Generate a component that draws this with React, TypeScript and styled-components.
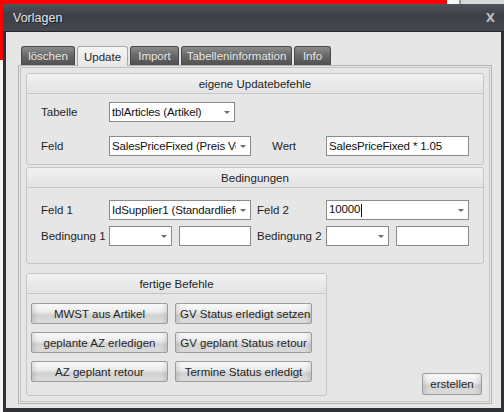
import React from "react";
import styled, { createGlobalStyle } from "styled-components";

const GlobalStyle = createGlobalStyle`
    html, body {
        margin: 0;
        padding: 0;
        width: 504px;
        height: 412px;
        overflow: hidden;
        font-family: "Liberation Sans", Arial, sans-serif;
        font-size: 11px;
        color: #1f1f1f;
    }
    body {
        background:
            linear-gradient(#ff0000, #ff0000) 0 0 / 447px 4px no-repeat,
            linear-gradient(#ff0000, #ff0000) 0 0 / 3px 60px no-repeat,
            linear-gradient(#9a9a9a, #9a9a9a) 459px 0 / 2px 4px no-repeat,
            linear-gradient(#d8d8d8, #d8d8d8) 461px 0 / 43px 4px no-repeat,
            #f6f6f6;
    }
`;

const Dialog = styled.div`
    margin: 4px 0 0 3px;
    width: 501px;
    height: 408px;
    display: flex;
    flex-direction: column;
    background: #2f3137;
`;

const TitleBar = styled.div`
    height: 28px;
    flex: none;
    display: flex;
    align-items: center;
    justify-content: space-between;
    padding: 0 9px 0 10px;
    background: linear-gradient(#50535b, #3d4047 40%, #45484f);
    border-bottom: 1px solid #26272b;
    box-sizing: border-box;
`;

const Title = styled.span`
    color: #e4e4e4;
    font-size: 12.5px;
    text-shadow: 1px 1px 0 #1c1c1c;
`;

const CloseX = styled.span`
    color: #b8bcc4;
    font-size: 12px;
    font-weight: bold;
    font-family: "DejaVu Sans", sans-serif;
`;

const Body = styled.div`
    flex: 1;
    margin: 0 3px 4px 3px;
    background: #e6e6e6;
    padding: 13px 9px 0 12px;
    display: flex;
    flex-direction: column;
`;

const TabBar = styled.div`
    display: flex;
    align-items: flex-end;
    gap: 2px;
    padding-left: 3px;
    height: 20px;
`;

const Tab = styled.div<{ $active?: boolean; $w: number }>`
    width: ${(p) => p.$w}px;
    height: ${(p) => (p.$active ? "20px" : "19px")};
    box-sizing: border-box;
    display: flex;
    align-items: center;
    justify-content: center;
    border-radius: 3px 3px 0 0;
    font-size: 11.5px;
    white-space: nowrap;
    border: 1px solid ${(p) => (p.$active ? "#a8a8a8" : "#4a4a4a")};
    border-bottom: none;
    color: ${(p) => (p.$active ? "#1f1f1f" : "#e6e6e6")};
    background: ${(p) =>
        p.$active
            ? "linear-gradient(#f4f4f4, #e8e8e8)"
            : "linear-gradient(#8c8c8c, #6a6a6a 45%, #505050)"};
    margin-bottom: ${(p) => (p.$active ? "-1px" : "0")};
    position: relative;
    z-index: ${(p) => (p.$active ? 1 : 0)};
`;

const TabPane = styled.div`
    height: 339px;
    box-sizing: border-box;
    border: 1px solid #b4b4b4;
    box-shadow: inset 0 0 0 1px #e6e6e6, inset 0 0 0 2px #c4c4c4;
    padding: 7px 7px 8px 7px;
    display: flex;
    flex-direction: column;
    gap: 2px;
`;

const Group = styled.div<{ $width?: number }>`
    width: ${(p) => (p.$width ? `${p.$width}px` : "auto")};
    border: 1px solid #c6c6c6;
    border-radius: 3px;
    background: #e6e6e6;
    box-sizing: border-box;
`;

const GroupHeader = styled.div`
    height: 20px;
    display: flex;
    align-items: center;
    justify-content: center;
    font-size: 11.5px;
    background: linear-gradient(#f2f2f2, #e2e2e2);
    border-bottom: 1px solid #c6c6c6;
    border-radius: 3px 3px 0 0;
    box-sizing: border-box;
`;

const GroupContent = styled.div<{ $pad: string; $gap: number }>`
    padding: ${(p) => p.$pad};
    display: flex;
    flex-direction: column;
    gap: ${(p) => p.$gap}px;
`;

const Row = styled.div`
    display: flex;
    align-items: center;
    height: 20px;
`;

const Label = styled.span<{ $w: number; $ml?: number }>`
    width: ${(p) => p.$w}px;
    margin-left: ${(p) => p.$ml ?? 0}px;
    flex: none;
    font-size: 11.5px;
`;

const FieldBox = styled.div<{ $w: number; $ml?: number }>`
    width: ${(p) => p.$w}px;
    margin-left: ${(p) => p.$ml ?? 0}px;
    height: 20px;
    flex: none;
    box-sizing: border-box;
    border: 1px solid #8c8c8c;
    background: #ffffff;
    display: flex;
    align-items: center;
    padding: 0 0 0 2px;
    font-size: 11.5px;
    letter-spacing: -0.15px;
    color: #111;
    white-space: nowrap;
    overflow: hidden;
`;

const FieldText = styled.span`
    flex: 1;
    overflow: hidden;
`;

const Arrow = styled.span`
    width: 14px;
    flex: none;
    display: flex;
    justify-content: center;
    &::after {
        content: "";
        border-left: 3px solid transparent;
        border-right: 3px solid transparent;
        border-top: 3px solid #6a6a6a;
    }
`;

const Caret = styled.span`
    display: inline-block;
    width: 1px;
    height: 13px;
    background: #111;
    vertical-align: middle;
    margin-left: 1px;
`;

const Bottom = styled.div`
    flex: 1;
    display: flex;
    align-items: flex-end;
    justify-content: space-between;
    padding-top: 7px;
`;

const ButtonGrid = styled.div`
    display: grid;
    grid-template-columns: 137px 137px;
    column-gap: 7px;
    row-gap: 8px;
    padding: 9px 13px 13px 4px;
`;

const CmdButton = styled.button`
    height: 21px;
    padding: 0 4px;
    font-family: inherit;
    font-size: 11.5px;
    color: #1f1f1f;
    border: 1px solid #9c9c9c;
    border-radius: 2px;
    background: linear-gradient(#fbfbfb, #ececec 40%, #d2d2d2 60%, #dedede);
    box-shadow: inset 5px 0 5px -3px rgba(0, 0, 0, 0.12), inset -5px 0 5px -3px rgba(0, 0, 0, 0.12);
    white-space: nowrap;
    cursor: pointer;
`;

const CreateButton = styled(CmdButton)`
    width: 60px;
    height: 22px;
    margin: 0 2px 1px 0;
`;

const Select = ({ w, ml, value }: { w: number; ml?: number; value?: string }) => (
    <FieldBox $w={w} $ml={ml}>
        <FieldText>{value}</FieldText>
        <Arrow />
    </FieldBox>
);

const tabs = [
    { label: "löschen", w: 54 },
    { label: "Update", w: 51, active: true },
    { label: "Import", w: 49 },
    { label: "Tabelleninformation", w: 111 },
    { label: "Info", w: 37 },
];

const commands = [
    "MWST aus Artikel",
    "GV Status erledigt setzen",
    "geplante AZ erledigen",
    "GV geplant Status retour",
    "AZ geplant retour",
    "Termine Status erledigt",
];

const App = (): JSX.Element => {
    return (
        <>
            <GlobalStyle />
            <Dialog>
                <TitleBar>
                    <Title>Vorlagen</Title>
                    <CloseX>X</CloseX>
                </TitleBar>
                <Body>
                    <TabBar>
                        {tabs.map((t) => (
                            <Tab key={t.label} $w={t.w} $active={t.active}>
                                {t.label}
                            </Tab>
                        ))}
                    </TabBar>
                    <TabPane>
                        <Group>
                            <GroupHeader>eigene Updatebefehle</GroupHeader>
                            <GroupContent $pad="8px 14px 8px 14px" $gap={14}>
                                <Row>
                                    <Label $w={68}>Tabelle</Label>
                                    <Select w={126} value="tblArticles (Artikel)" />
                                </Row>
                                <Row>
                                    <Label $w={68}>Feld</Label>
                                    <Select w={142} value="SalesPriceFixed (Preis Verl" />
                                    <Label $w={54} $ml={21}>Wert</Label>
                                    <FieldBox $w={143}>SalesPriceFixed * 1.05</FieldBox>
                                </Row>
                            </GroupContent>
                        </Group>
                        <Group>
                            <GroupHeader>Bedingungen</GroupHeader>
                            <GroupContent $pad="12px 14px 17px 14px" $gap={6}>
                                <Row>
                                    <Label $w={68}>Feld 1</Label>
                                    <Select w={142} value="IdSupplier1 (Standardliefe" />
                                    <Label $w={69} $ml={6}>Feld 2</Label>
                                    <FieldBox $w={143}>
                                        <FieldText>
                                            10000<Caret />
                                        </FieldText>
                                        <Arrow />
                                    </FieldBox>
                                </Row>
                                <Row>
                                    <Label $w={68}>Bedingung 1</Label>
                                    <Select w={63} />
                                    <FieldBox $w={72} $ml={7} />
                                    <Label $w={69} $ml={6}>Bedingung 2</Label>
                                    <Select w={63} />
                                    <FieldBox $w={73} $ml={7} />
                                </Row>
                            </GroupContent>
                        </Group>
                        <Bottom>
                            <Group $width={301}>
                                <GroupHeader>fertige Befehle</GroupHeader>
                                <ButtonGrid>
                                    {commands.map((c) => (
                                        <CmdButton key={c}>{c}</CmdButton>
                                    ))}
                                </ButtonGrid>
                            </Group>
                            <CreateButton>erstellen</CreateButton>
                        </Bottom>
                    </TabPane>
                </Body>
            </Dialog>
        </>
    );
};

export default App;
